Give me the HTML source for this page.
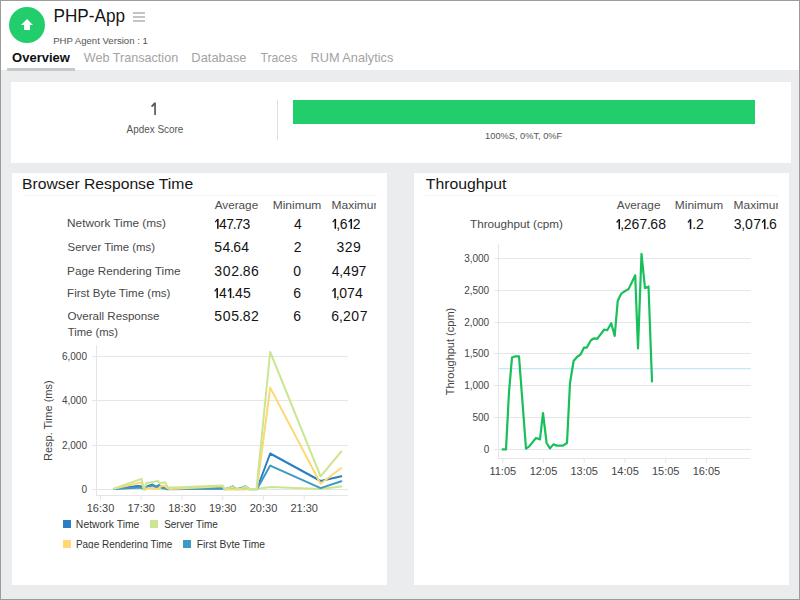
<!DOCTYPE html>
<html><head><meta charset="utf-8">
<style>
html,body{margin:0;padding:0;width:800px;height:600px;overflow:hidden;background:#fff}
svg{display:block;font-family:"Liberation Sans", sans-serif}
</style></head><body>
<svg width="800" height="600" viewBox="0 0 800 600">
<rect x="0" y="0" width="800" height="600" fill="#ebeced"/>
<rect x="0" y="0" width="800" height="70" fill="#ffffff"/>
<circle cx="27" cy="25" r="18" fill="#22ce6c"/>
<path d="M27 19 L33 25 L30 25 L30 30 L24 30 L24 25 L21 25 Z" fill="#fff"/>
<g fill="#c4c4c4"><rect x="133" y="12" width="12" height="2"/><rect x="133" y="16" width="12" height="2"/><rect x="133" y="20" width="12" height="2"/></g>
<rect x="7" y="68" width="68" height="3" fill="#c8c8c8"/>
<rect x="11" y="82" width="780" height="81" fill="#fff"/>
<rect x="277" y="100" width="1" height="40" fill="#e0e0e0"/>
<rect x="293" y="100" width="462" height="24" fill="#22ce6c"/>
<path d="M154.2 102.5 H155.9 V115 H154.2 V105.4 L152 107.3 L151 106.1 Z" fill="#5a5a5a"/>
<rect x="12" y="173" width="375" height="412" fill="#fff"/>
<rect x="414" y="173" width="375" height="412" fill="#fff"/>
<rect x="23" y="195" width="353" height="1" fill="#f3f3f3"/>
<rect x="425" y="195" width="353" height="1" fill="#f3f3f3"/>
<svg x="330" y="195" width="46" height="20" overflow="hidden"><text x="1.56" y="14" font-size="11.3" fill="#4d4d4d" textLength="51.99" lengthAdjust="spacingAndGlyphs">Maximum</text></svg>
<svg x="730" y="195" width="48" height="20" overflow="hidden"><text x="3.56" y="14.2" font-size="11.3" fill="#4d4d4d" textLength="51.99" lengthAdjust="spacingAndGlyphs">Maximum</text></svg>
<svg x="0" y="210" width="777" height="25" overflow="hidden"><g transform="translate(0,-210)" font-size="14" fill="#141414"><rect x="763.94" y="219.30" width="1.55" height="9.9"/><path d="M763.94 219.30 h1.55 L762.49 222.90 L761.69 222.10 Z"/><text x="733.81" y="229.2">3</text><text x="741.27" y="229.2">,</text><text x="745.01" y="229.2">0</text><text x="753.13" y="229.2">7</text><text x="765.73" y="229.2">.</text><text x="769.03" y="229.2">6</text></g></svg>
<text x="53.46" y="21.8" font-size="18" fill="#141414" textLength="71.54" lengthAdjust="spacingAndGlyphs">PHP-App</text>
<text x="53.16" y="43.7" font-size="9.6" fill="#555" textLength="94.63" lengthAdjust="spacingAndGlyphs">PHP Agent Version : 1</text>
<text x="12.09" y="61.5" font-size="12.6" font-weight="bold" fill="#111" textLength="57.86" lengthAdjust="spacingAndGlyphs">Overview</text>
<text x="83.75" y="61.5" font-size="12.6" fill="#a3a3a3" textLength="94.46" lengthAdjust="spacingAndGlyphs">Web Transaction</text>
<text x="191.39" y="61.5" font-size="12.6" fill="#a3a3a3" textLength="55.13" lengthAdjust="spacingAndGlyphs">Database</text>
<text x="260.41" y="61.5" font-size="12.6" fill="#a3a3a3" textLength="36.87" lengthAdjust="spacingAndGlyphs">Traces</text>
<text x="310.51" y="61.5" font-size="12.6" fill="#a3a3a3" textLength="82.88" lengthAdjust="spacingAndGlyphs">RUM Analytics</text>
<text x="126.60" y="133.2" font-size="10.6" fill="#555" textLength="56.70" lengthAdjust="spacingAndGlyphs">Apdex Score</text>
<text x="485.12" y="138.7" font-size="9.7" fill="#555" textLength="77.08" lengthAdjust="spacingAndGlyphs">100%S, 0%T, 0%F</text>
<text x="22.02" y="189.3" font-size="15.3" fill="#161616" textLength="171.11" lengthAdjust="spacingAndGlyphs">Browser Response Time</text>
<text x="214.70" y="209" font-size="11.3" fill="#4d4d4d" textLength="43.48" lengthAdjust="spacingAndGlyphs">Average</text>
<text x="272.66" y="209" font-size="11.3" fill="#4d4d4d" textLength="48.66" lengthAdjust="spacingAndGlyphs">Minimum</text>
<text x="67.08" y="227.3" font-size="11.3" fill="#484848" textLength="98.83" lengthAdjust="spacingAndGlyphs">Network Time (ms)</text>
<text x="67.64" y="251.2" font-size="11.3" fill="#484848" textLength="87.44" lengthAdjust="spacingAndGlyphs">Server Time (ms)</text>
<text x="67.09" y="275.3" font-size="11.3" fill="#484848" textLength="113.39" lengthAdjust="spacingAndGlyphs">Page Rendering Time</text>
<text x="67.10" y="297" font-size="11.3" fill="#484848" textLength="103.30" lengthAdjust="spacingAndGlyphs">First Byte Time (ms)</text>
<text x="67.46" y="320.3" font-size="11.3" fill="#484848" textLength="92.01" lengthAdjust="spacingAndGlyphs">Overall Response</text>
<text x="67.82" y="336" font-size="11.3" fill="#484848" textLength="50.16" lengthAdjust="spacingAndGlyphs">Time (ms)</text>
<text x="425.75" y="189.3" font-size="15.3" fill="#161616" textLength="80.69" lengthAdjust="spacingAndGlyphs">Throughput</text>
<text x="616.75" y="209.2" font-size="11.3" fill="#4d4d4d" textLength="43.73" lengthAdjust="spacingAndGlyphs">Average</text>
<text x="674.82" y="209.2" font-size="11.3" fill="#4d4d4d" textLength="48.30" lengthAdjust="spacingAndGlyphs">Minimum</text>
<text x="470.07" y="227.5" font-size="11.3" fill="#484848" textLength="92.79" lengthAdjust="spacingAndGlyphs">Throughput (cpm)</text>
<text x="75.89" y="527.7" font-size="10" fill="#333" textLength="63.53" lengthAdjust="spacingAndGlyphs">Network Time</text>
<text x="164.19" y="527.7" font-size="10" fill="#333" textLength="53.51" lengthAdjust="spacingAndGlyphs">Server Time</text>
<g font-size="14" fill="#141414"><rect x="217.05" y="218.90" width="1.55" height="9.9"/><path d="M217.05 218.90 h1.55 L215.60 222.50 L214.80 221.70 Z"/><text x="218.89" y="228.8">4</text><text x="226.18" y="228.8">7</text><text x="232.81" y="228.8">.</text><text x="235.29" y="228.8">7</text><text x="242.58" y="228.8">3</text>
<text x="294.08" y="228.8">4</text>
<rect x="334.55" y="218.90" width="1.55" height="9.9"/><path d="M334.55 218.90 h1.55 L333.10 222.50 L332.30 221.70 Z"/><rect x="350.51" y="218.90" width="1.55" height="9.9"/><path d="M350.51 218.90 h1.55 L349.06 222.50 L348.26 221.70 Z"/><text x="336.29" y="228.8">,</text><text x="339.76" y="228.8">6</text><text x="352.68" y="228.8">2</text>
<text x="214.36" y="252.1">5</text><text x="222.53" y="252.1">4</text><text x="230.05" y="252.1">.</text><text x="233.19" y="252.1">6</text><text x="241.36" y="252.1">4</text>
<text x="293.84" y="252.1">2</text>
<text x="336.56" y="252.1">3</text><text x="344.82" y="252.1">2</text><text x="353.08" y="252.1">9</text>
<text x="214.36" y="275.9">3</text><text x="222.78" y="275.9">0</text><text x="231.20" y="275.9">2</text><text x="238.96" y="275.9">.</text><text x="242.78" y="275.9">8</text><text x="250.98" y="275.9">6</text>
<text x="293.16" y="275.9">0</text>
<text x="331.78" y="275.9">4</text><text x="339.25" y="275.9">,</text><text x="342.99" y="275.9">4</text><text x="350.90" y="275.9">9</text><text x="358.58" y="275.9">7</text>
<rect x="216.45" y="288.20" width="1.55" height="9.9"/><path d="M216.45 288.20 h1.55 L215.00 291.80 L214.20 291.00 Z"/><rect x="229.77" y="288.20" width="1.55" height="9.9"/><path d="M229.77 288.20 h1.55 L228.32 291.80 L227.52 291.00 Z"/><text x="218.93" y="298.1">4</text><text x="231.38" y="298.1">.</text><text x="234.93" y="298.1">4</text><text x="243.08" y="298.1">5</text>
<text x="293.34" y="298.1">6</text>
<rect x="334.25" y="288.20" width="1.55" height="9.9"/><path d="M334.25 288.20 h1.55 L332.80 291.80 L332.00 291.00 Z"/><text x="335.75" y="298.1">,</text><text x="339.20" y="298.1">0</text><text x="347.02" y="298.1">7</text><text x="355.06" y="298.1">4</text>
<text x="214.36" y="320.9">5</text><text x="222.74" y="320.9">0</text><text x="231.33" y="320.9">5</text><text x="239.05" y="320.9">.</text><text x="242.83" y="320.9">8</text><text x="250.98" y="320.9">2</text>
<text x="293.34" y="320.9">6</text>
<text x="331.34" y="320.9">6</text><text x="339.08" y="320.9">,</text><text x="342.89" y="320.9">2</text><text x="351.28" y="320.9">0</text><text x="359.68" y="320.9">7</text>
<rect x="618.50" y="219.30" width="1.55" height="9.9"/><path d="M618.50 219.30 h1.55 L617.05 222.90 L616.25 222.10 Z"/><text x="620.26" y="229.2">,</text><text x="623.75" y="229.2">2</text><text x="631.62" y="229.2">6</text><text x="639.49" y="229.2">7</text><text x="646.92" y="229.2">.</text><text x="650.19" y="229.2">6</text><text x="658.28" y="229.2">8</text>
<rect x="689.75" y="219.30" width="1.55" height="9.9"/><path d="M689.75 219.30 h1.55 L688.30 222.90 L687.50 222.10 Z"/><text x="692.13" y="229.2">.</text><text x="696.03" y="229.2">2</text></g>
<g fill="#e6e6e6">
<rect x="92" y="356.0" width="256" height="1"/>
<rect x="92" y="400.0" width="256" height="1"/>
<rect x="92" y="445.0" width="256" height="1"/>
<rect x="92" y="489.0" width="256" height="1"/>
<rect x="96" y="345" width="1" height="150"/>
<rect x="96" y="495" width="252" height="1"/>
<rect x="100.0" y="496" width="1" height="4"/>
<rect x="140.7" y="496" width="1" height="4"/>
<rect x="181.5" y="496" width="1" height="4"/>
<rect x="222.2" y="496" width="1" height="4"/>
<rect x="263.0" y="496" width="1" height="4"/>
<rect x="303.7" y="496" width="1" height="4"/>
</g>
<g font-size="10" fill="#444" text-anchor="end">
<text x="87" y="360.1">6,000</text>
<text x="87" y="404.1">4,000</text>
<text x="87" y="449.1">2,000</text>
<text x="87" y="493.1">0</text>
</g><g font-size="11" fill="#444" text-anchor="middle">
<text x="100.5" y="512">16:30</text>
<text x="141.2" y="512">17:30</text>
<text x="182.0" y="512">18:30</text>
<text x="222.7" y="512">19:30</text>
<text x="263.5" y="512">20:30</text>
<text x="304.2" y="512">21:30</text>
</g>
<text transform="translate(52,420.7) rotate(-90)" font-size="11" fill="#444" text-anchor="middle">Resp. Time (ms)</text>
<g fill="none" stroke-width="2" stroke-linejoin="round" stroke-linecap="round">
<polyline stroke="#cce591" points="114.5,489 141.3,488 168,489 222.7,488.5 256.9,489 270.2,487 320.6,489 341.3,486.6"/>
<polyline stroke="#2a7fc4" points="114.5,488.8 138,486 141.3,486.3 144,489 148,486 152.5,484.5 155,486 157,486.8 159,485 161.5,487 166,488 168,489 175,488.6 222.7,488.1 224.6,489 228,488.7 232.6,486.3 236.2,489 241,488.8 245,486.3 249.4,489 256.9,489 270.2,453.5 320.6,481 341.3,476.3"/>
<polyline stroke="#3d9ac6" points="114.5,489 141.3,487.5 144,489.2 148,487 152.5,485.5 157,487.5 159,486 162,488 168,489.2 222.7,488.6 225,489.2 232.6,487 236.2,489.2 245,487 249.4,489.2 256.9,489.2 270.2,465.6 320.6,488.1 341.3,481.3"/>
<polyline stroke="#fdd873" points="114.5,488.5 141.3,482.6 144.5,490 148,488 152,488.5 158,489 160.5,486.5 164,485.5 166.5,487.5 170,489 222.7,486.2 224.6,489.5 232.6,489.5 236,489.5 245,489.5 256.9,489 270.2,387.6 320.6,483.8 341.3,468"/>
<polyline stroke="#cce591" points="114.5,488.5 141.5,478.9 144,489 146.5,483 153,482 158,481 160,483.2 165,482.3 168,487.3 175,487.4 222.7,485.4 224.6,489.2 228,488.5 232.6,486.7 236.2,489 241,488.8 245,486.7 249.4,489 256.5,489 270.2,352 320.6,476.3 341.3,451.5"/>
</g>
<rect x="63" y="520" width="8" height="8" fill="#2a7fc4"/>
<rect x="150" y="520" width="8" height="8" fill="#cce591"/>
<rect x="63" y="540" width="8" height="8" fill="#fdd873"/>
<rect x="183" y="540" width="8" height="8" fill="#3d9ac6"/>
<svg x="0" y="530" width="400" height="18.5" overflow="hidden"><g font-size="10" fill="#333">
<text x="75.92" y="17.7" textLength="96.38" lengthAdjust="spacingAndGlyphs">Page Rendering Time</text>
<text x="196.70" y="17.7" textLength="68.31" lengthAdjust="spacingAndGlyphs">First Byte Time</text>
</g></svg>
<g fill="#e6e6e6">
<rect x="494" y="449" width="257" height="1"/>
<rect x="494" y="417" width="257" height="1"/>
<rect x="494" y="385" width="257" height="1"/>
<rect x="494" y="353" width="257" height="1"/>
<rect x="494" y="322" width="257" height="1"/>
<rect x="494" y="290" width="257" height="1"/>
<rect x="494" y="258" width="257" height="1"/>
<rect x="498" y="244" width="1" height="214"/>
<rect x="498" y="458" width="252" height="1"/>
<rect x="502.3" y="459" width="1" height="4"/>
<rect x="543.0" y="459" width="1" height="4"/>
<rect x="583.7" y="459" width="1" height="4"/>
<rect x="624.5" y="459" width="1" height="4"/>
<rect x="665.2" y="459" width="1" height="4"/>
<rect x="705.9" y="459" width="1" height="4"/>
</g>
<rect x="498" y="368" width="253" height="1.3" fill="#c6e6fa"/>
<g font-size="10" fill="#444" text-anchor="end">
<text x="489.2" y="453.1">0</text>
<text x="489.2" y="421.1">500</text>
<text x="489.2" y="389.1">1,000</text>
<text x="489.2" y="357.1">1,500</text>
<text x="489.2" y="326.1">2,000</text>
<text x="489.2" y="294.1">2,500</text>
<text x="489.2" y="262.1">3,000</text>
</g><g font-size="11" fill="#444" text-anchor="middle">
<text x="502.8" y="475">11:05</text>
<text x="543.5" y="475">12:05</text>
<text x="584.2" y="475">13:05</text>
<text x="625.0" y="475">14:05</text>
<text x="665.7" y="475">15:05</text>
<text x="706.4" y="475">16:05</text>
</g>
<text transform="translate(454,351.5) rotate(-90)" font-size="11" fill="#444" text-anchor="middle">Throughput (cpm)</text>
<polyline fill="none" stroke="#17c05a" stroke-width="2.2" stroke-linejoin="round" stroke-linecap="round" points="502.6,449.4 506,449.4 509,392 512,357.6 515,356.4 519,356.4 526,448.6 529,446.6 536,438 540,439.4 543,413 546.6,443 550,448.4 553.4,444.4 557,445.6 563,445.6 567,443 570,383 573.6,361 577,357 580.6,354.4 583.9,347.7 586.7,347.7 590.9,340.2 594.1,338.3 597.2,338.8 604.2,329.5 607.2,330.2 611.2,323.2 614.7,336 617.7,301 621,294 624,291.7 628.7,288.9 635.2,275.3 638,348.4 641.5,253.9 645,288.2 648.5,286.5 652,381.5"/>
<rect x="0.5" y="0.5" width="799" height="599" fill="none" stroke="#9c9c9c" stroke-width="1"/>
</svg>
</body></html>
